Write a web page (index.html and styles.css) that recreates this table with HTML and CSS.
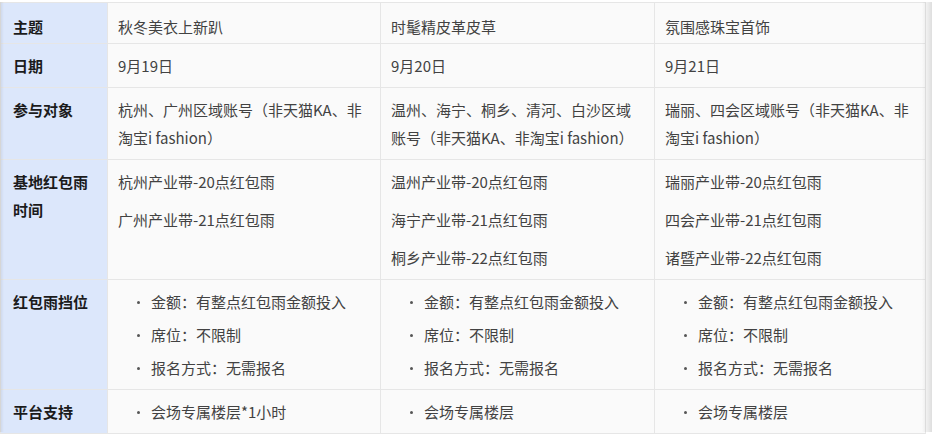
FILE: index.html
```html
<!DOCTYPE html>
<html lang="zh-CN">
<head>
<meta charset="utf-8">
<link rel="stylesheet" href="styles.css">
</head>
<body>
<div class="wrap">
  <table class="info">
    <colgroup>
      <col class="c-head">
      <col class="c2">
      <col class="c3">
      <col class="c4">
    </colgroup>
    <tbody>
      <tr class="first">
        <th>主题</th>
        <td>秋冬美衣上新趴</td>
        <td>时髦精皮革皮草</td>
        <td>氛围感珠宝首饰</td>
      </tr>
      <tr>
        <th>日期</th>
        <td>9月19日</td>
        <td>9月20日</td>
        <td>9月21日</td>
      </tr>
      <tr>
        <th>参与对象</th>
        <td>杭州、广州区域账号（非天猫KA、非淘宝i fashion）</td>
        <td>温州、海宁、桐乡、清河、白沙区域账号（非天猫KA、非淘宝i fashion）</td>
        <td>瑞丽、四会区域账号（非天猫KA、非淘宝i fashion）</td>
      </tr>
      <tr>
        <th>基地红包雨时间</th>
        <td><div class="paras"><p>杭州产业带-20点红包雨</p><p>广州产业带-21点红包雨</p></div></td>
        <td><div class="paras"><p>温州产业带-20点红包雨</p><p>海宁产业带-21点红包雨</p><p>桐乡产业带-22点红包雨</p></div></td>
        <td><div class="paras"><p>瑞丽产业带-20点红包雨</p><p>四会产业带-21点红包雨</p><p>诸暨产业带-22点红包雨</p></div></td>
      </tr>
      <tr>
        <th>红包雨挡位</th>
        <td><ul class="dots"><li>金额：有整点红包雨金额投入</li><li>席位：不限制</li><li>报名方式：无需报名</li></ul></td>
        <td><ul class="dots"><li>金额：有整点红包雨金额投入</li><li>席位：不限制</li><li>报名方式：无需报名</li></ul></td>
        <td><ul class="dots"><li>金额：有整点红包雨金额投入</li><li>席位：不限制</li><li>报名方式：无需报名</li></ul></td>
      </tr>
      <tr>
        <th>平台支持</th>
        <td><ul class="dots"><li>会场专属楼层*1小时</li></ul></td>
        <td><ul class="dots"><li>会场专属楼层</li></ul></td>
        <td><ul class="dots"><li>会场专属楼层</li></ul></td>
      </tr>
    </tbody>
  </table>
</div>
</body>
</html>
```

FILE: styles.css
```css
html, body {
  margin: 0;
  padding: 0;
  background: #ffffff;
}

body {
  font-family: "Noto Sans CJK SC", "Noto Sans", sans-serif;
  font-size: 15px;
  color: #333333;
}

.wrap {
  position: relative;
  width: 932px;
  padding-top: 2px;
  overflow: hidden;
}

.wrap::before {
  content: "";
  position: absolute;
  left: 0;
  top: 2px;
  bottom: 2px;
  width: 4px;
  background: linear-gradient(to right, rgba(0, 0, 0, 0.08), rgba(0, 0, 0, 0));
  pointer-events: none;
}

.wrap::after {
  content: "";
  position: absolute;
  right: 0;
  top: 2px;
  bottom: 2px;
  width: 10px;
  background: linear-gradient(to left, rgba(0, 0, 0, 0.13), rgba(0, 0, 0, 0));
  pointer-events: none;
}

.info {
  border-collapse: collapse;
  table-layout: fixed;
  width: 925px;
}

.c-head { width: 107px; }
.c2 { width: 273px; }
.c3 { width: 274px; }
.c4 { width: 271px; }

.info th,
.info td {
  border: 1px solid #e6e6e6;
  padding: 8px 10px 7px;
  line-height: 28px;
  vertical-align: top;
  text-align: left;
}

.info th {
  background: #dce7fb;
  color: #1b1b1b;
  font-weight: 700;
  padding-left: 12px;
}

.info td {
  background: #fafafa;
  color: #424242;
  font-weight: 400;
}

.info tr.first th,
.info tr.first td {
  padding-top: 10px;
  padding-bottom: 2px;
}

.paras {
  display: flex;
  flex-direction: column;
  gap: 10px;
}

.paras p {
  margin: 0;
}

.dots {
  list-style: none;
  margin: 0;
  padding: 0;
  display: flex;
  flex-direction: column;
  gap: 5px;
}

.dots li {
  position: relative;
  padding-left: 33px;
}

.dots li::before {
  content: "";
  position: absolute;
  left: 19px;
  top: 13px;
  width: 3px;
  height: 3px;
  border-radius: 50%;
  background: #555555;
}
```
